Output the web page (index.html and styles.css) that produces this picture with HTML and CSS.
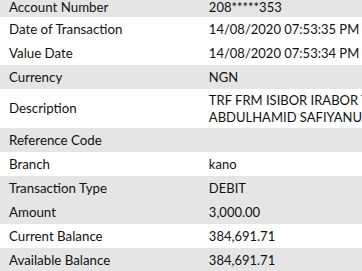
FILE: index.html
```html
<!DOCTYPE html>
<html>
<head>
<meta charset="utf-8">
<link rel="stylesheet" href="styles.css">
</head>
<body>
<div class="wrap">
<table class="details">
  <tr class="shade first"><td class="label">Account Number</td><td class="value">208*****353</td></tr>
  <tr><td class="label">Date of Transaction</td><td class="value">14/08/2020 07:53:35 PM</td></tr>
  <tr><td class="label">Value Date</td><td class="value">14/08/2020 07:53:34 PM</td></tr>
  <tr class="shade"><td class="label">Currency</td><td class="value">NGN</td></tr>
  <tr class="multi"><td class="label">Description</td><td class="value">TRF FRM ISIBOR IRABOR TO ABDULHAMID SAFIYANU</td></tr>
  <tr class="shade"><td class="label">Reference Code</td><td class="value"></td></tr>
  <tr><td class="label">Branch</td><td class="value">kano</td></tr>
  <tr class="shade"><td class="label">Transaction Type</td><td class="value">DEBIT</td></tr>
  <tr class="shade"><td class="label">Amount</td><td class="value">3,000.00</td></tr>
  <tr><td class="label">Current Balance</td><td class="value">384,691.71</td></tr>
  <tr class="shade"><td class="label">Available Balance</td><td class="value">384,691.71</td></tr>
</table>
</div>
</body>
</html>
```
FILE: styles.css
```css
html, body {
  margin: 0;
  padding: 0;
  background: #ffffff;
  overflow: hidden;
}
.wrap {
  width: 460px;
  margin-top: -7px;
}
.details {
  border-collapse: collapse;
  border-spacing: 0;
  width: 460px;
  font-family: Lato, "Open Sans", sans-serif;
  font-size: 13px;
  color: #111111;
}
.details td {
  padding: 3px 0 3px 9px;
  line-height: 18px;
  height: 18px;
  vertical-align: middle;
  text-align: left;
}
.details tr.first td {
  padding-top: 5px;
  padding-bottom: 1px;
}
.details td.label {
  width: 190px;
  font-size: 13.3px;
}
.details td.value {
  width: 210px;
  padding-right: 40px;
}
.details tr.shade td {
  background: #e5e5e5;
}
.details tr.multi td {
  line-height: 16.5px;
}
```
